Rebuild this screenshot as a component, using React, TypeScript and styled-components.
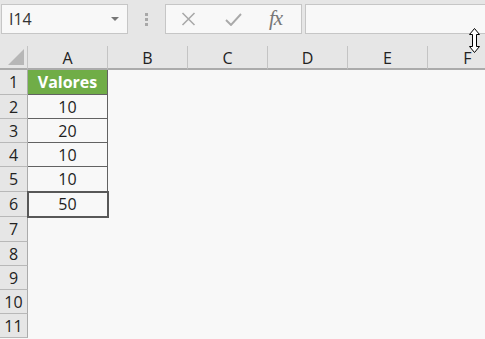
import React from 'react';
import styled, { createGlobalStyle, css } from 'styled-components';

const GlobalStyle = createGlobalStyle`
  html, body {
    margin: 0;
    padding: 0;
    background: #f8f8f8;
  }
  body {
    font-family: "Open Sans", "Liberation Sans", sans-serif;
    color: #1e1e1e;
  }
`;

const Page = styled.div`
  position: relative;
  width: 485px;
  height: 339px;
  overflow: hidden;
  background: #f8f8f8;
`;

const Toolbar = styled.div`
  display: flex;
  align-items: flex-start;
  height: 46px;
  padding: 4px 0 0 1px;
  box-sizing: border-box;
  background: #e6e6e6;
`;

const NameBox = styled.div`
  display: flex;
  align-items: center;
  justify-content: space-between;
  width: 127px;
  height: 30px;
  box-sizing: border-box;
  padding: 0 8px 0 7px;
  background: #f8f8f8;
  border: 1px solid #c6c6c6;
  font-size: 16px;
  color: #333;
`;

const DropArrow = styled.span`
  width: 0;
  height: 0;
  border-left: 4px solid transparent;
  border-right: 4px solid transparent;
  border-top: 4px solid #777;
`;

const Grip = styled.div`
  display: flex;
  flex-direction: column;
  align-items: center;
  justify-content: center;
  gap: 2px;
  width: 37px;
  height: 30px;
`;

const GripDot = styled.span`
  width: 3px;
  height: 3px;
  background: #a8a8a8;
`;

const FxBox = styled.div`
  display: flex;
  align-items: center;
  width: 137px;
  height: 30px;
  box-sizing: border-box;
  background: #f8f8f8;
  border: 1px solid #c6c6c6;
  padding-left: 15px;
`;

const FxIcon = styled.span<{ $w: number }>`
  display: flex;
  align-items: center;
  justify-content: flex-start;
  width: ${p => p.$w}px;
`;

const FxText = styled.span`
  font-family: "Liberation Serif", serif;
  font-style: italic;
  font-size: 21px;
  color: #777;
  letter-spacing: -1px;
  line-height: 1;
  margin-top: -2px;
`;

const FormulaInput = styled.div`
  flex: 1;
  margin-left: 3px;
  height: 30px;
  box-sizing: border-box;
  background: #f8f8f8;
  border: 1px solid #c6c6c6;
  border-right: none;
`;

const rowHeights = [25, 24, 24, 24, 25, 25, 25, 24, 24, 24, 24];

const Sheet = styled.div`
  display: grid;
  grid-template-columns: 28px repeat(6, 80px);
  grid-template-rows: 24px ${rowHeights.map(h => `${h}px`).join(' ')};
`;

const Corner = styled.div`
  display: flex;
  align-items: flex-end;
  justify-content: flex-end;
  padding: 0 3px 3px 0;
  box-sizing: border-box;
  background: #e6e6e6;
  border-right: 1px solid #c4c4c4;
  border-bottom: 2px solid #ababab;
`;

const CornerTriangle = styled.span`
  width: 16px;
  height: 16px;
  background: #b7b7b7;
  clip-path: polygon(100% 0, 100% 100%, 0 100%);
`;

const ColHeader = styled.div`
  display: flex;
  align-items: center;
  justify-content: center;
  box-sizing: border-box;
  background: #e6e6e6;
  border-right: 1px solid #c4c4c4;
  border-bottom: 2px solid #ababab;
  font-size: 16px;
  color: #222;
  padding-top: 1px;
`;

const RowHeader = styled.div`
  display: flex;
  align-items: center;
  justify-content: center;
  box-sizing: border-box;
  background: #e6e6e6;
  border-right: 1px solid #ababab;
  border-bottom: 1px solid #b8b8b8;
  font-size: 16px;
  color: #222;
`;

const Cell = styled.div<{ $boxed?: boolean; $head?: boolean; $selected?: boolean }>`
  display: flex;
  align-items: center;
  justify-content: center;
  box-sizing: border-box;
  font-size: 16px;
  color: #1e1e1e;
  ${p => p.$boxed && css`
    border-right: 1px solid #626262;
    border-bottom: 1px solid #626262;
  `}
  ${p => p.$head && css`
    background: #70ad47;
    color: #ffffff;
    font-weight: 700;
    font-size: 16px;
  `}
  ${p => p.$selected && css`
    position: relative;
    z-index: 1;
    outline: 2px solid #585858;
    outline-offset: -1px;
  `}
`;

const Cursor = styled.svg`
  position: absolute;
  left: 468px;
  top: 28px;
`;

const columns = ['A', 'B', 'C', 'D', 'E', 'F'];
const values = ['Valores', '10', '20', '10', '10', '50'];

export default function App() {
  return (
    <Page>
      <GlobalStyle />
      <Toolbar>
        <NameBox>
          <span>I14</span>
          <DropArrow />
        </NameBox>
        <Grip>
          <GripDot />
          <GripDot />
          <GripDot />
        </Grip>
        <FxBox>
          <FxIcon $w={44}>
            <svg width="15" height="14" viewBox="0 0 15 14">
              <path d="M1.5 1 L13.5 13 M13.5 1 L1.5 13" stroke="#a9a9a9" strokeWidth="1.6" fill="none" />
            </svg>
          </FxIcon>
          <FxIcon $w={44}>
            <svg width="17" height="13" viewBox="0 0 17 13">
              <path d="M1 7 L6 12 L16 1" stroke="#a9a9a9" strokeWidth="1.9" fill="none" />
            </svg>
          </FxIcon>
          <FxIcon $w={30}>
            <FxText>fx</FxText>
          </FxIcon>
        </FxBox>
        <FormulaInput />
      </Toolbar>
      <Sheet>
        <Corner>
          <CornerTriangle />
        </Corner>
        {columns.map(c => (
          <ColHeader key={c}>{c}</ColHeader>
        ))}
        {rowHeights.map((_, i) => (
          <React.Fragment key={i}>
            <RowHeader>{i + 1}</RowHeader>
            {columns.map((c, j) => {
              const inTable = j === 0 && i < values.length;
              return (
                <Cell
                  key={c}
                  $boxed={inTable}
                  $head={inTable && i === 0}
                  $selected={inTable && i === 5}
                >
                  {inTable ? values[i] : null}
                </Cell>
              );
            })}
          </React.Fragment>
        ))}
      </Sheet>
      <Cursor width="13" height="25" viewBox="0 0 13 25">
        <path
          d="M6.5 0.5 L11.5 6.5 L8.5 6.5 L8.5 18.5 L11.5 18.5 L6.5 24.5 L1.5 18.5 L4.5 18.5 L4.5 6.5 L1.5 6.5 Z"
          fill="#ffffff"
          stroke="#000000"
          strokeWidth="1"
        />
      </Cursor>
    </Page>
  );
}
